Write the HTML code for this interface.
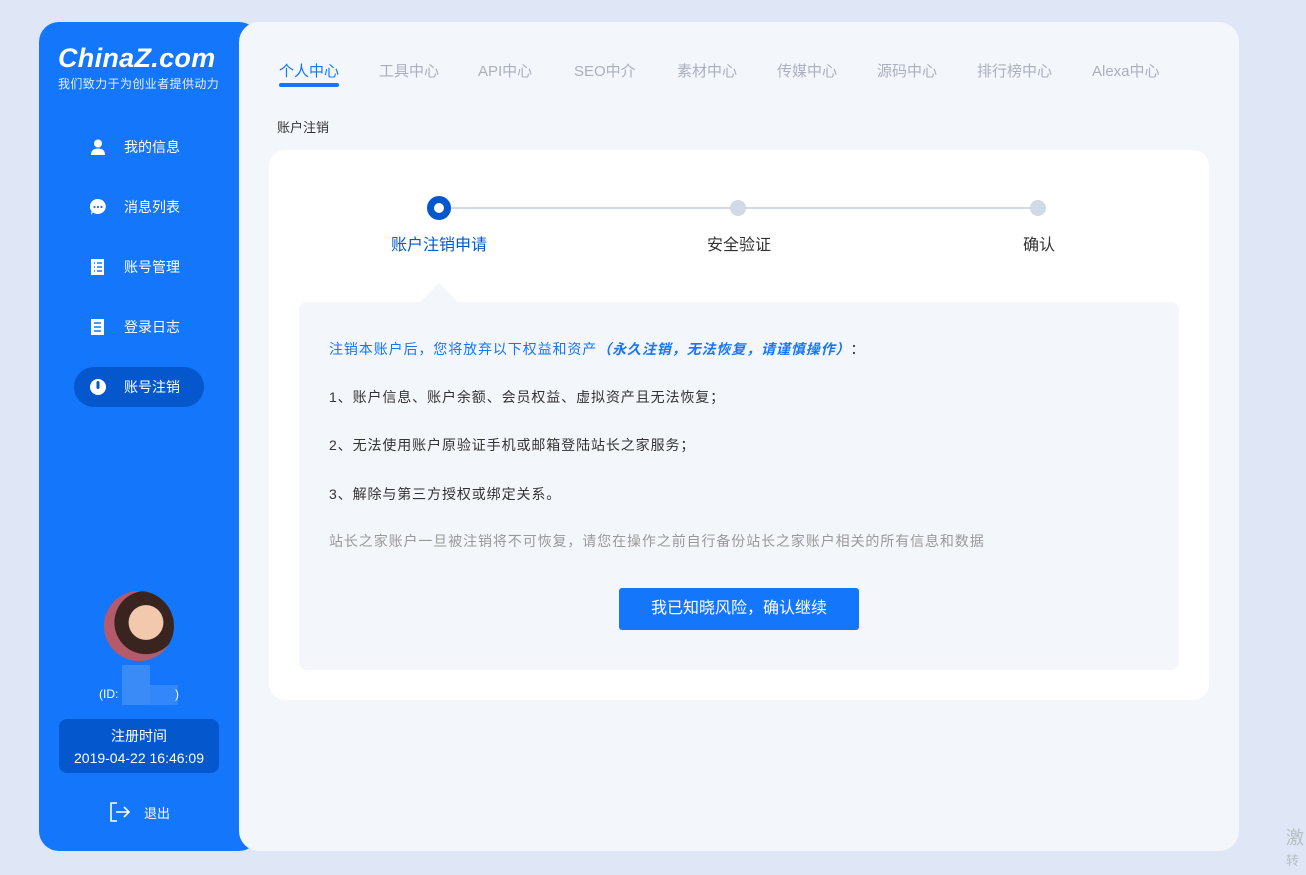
<!DOCTYPE html>
<html><head><meta charset="utf-8"><style>
*{margin:0;padding:0;box-sizing:border-box}
body{width:1306px;height:875px;background:#dfe7f7;font-family:"Liberation Sans","Noto Sans CJK SC",sans-serif;position:relative;overflow:hidden}
.side{position:absolute;left:39px;top:22px;width:220px;height:829px;background:#1476fb;border-radius:20px}
.main{position:absolute;left:239px;top:22px;width:1000px;height:829px;background:#f3f6fb;border-radius:20px}
.logo{position:absolute;left:58px;top:43px;color:#fff;font-size:27px;font-weight:bold;font-style:italic;letter-spacing:0.3px}
.slogan{position:absolute;left:58px;top:75px;color:#e6efff;font-size:12px;letter-spacing:0.4px}
.mi{position:absolute;left:74px;width:130px;height:40px;color:#fff;font-size:14px;line-height:40px}
.mi span{position:absolute;left:50px}
.mi svg{position:absolute;left:16px;top:12px}
.act{background:#0457cc;border-radius:20px}
.nav{position:absolute;top:60px;font-size:15px;color:#a9b0bf}
.abs{position:absolute}
.t{font-size:14px;letter-spacing:0.9px}
</style></head><body>
<div class="side"></div>
<div class="main"></div>
<div class="logo">ChinaZ.com</div>
<div class="slogan">我们致力于为创业者提供动力</div>
<div class="mi" style="top:127px"><svg width="16" height="16" viewBox="0 0 16 16"><circle cx="8" cy="4.5" r="4" fill="#fff"/><path d="M1 16c0-5 3-6.5 7-6.5s7 1.5 7 6.5z" fill="#fff"/></svg><span>我的信息</span></div>
<div class="mi" style="top:187px"><svg width="16" height="16" viewBox="0 0 16 16"><path d="M8 0a8 7.5 0 1 1-5 13.5L1 16l.5-4A8 7.5 0 0 1 8 0z" fill="#fff"/><circle cx="4.5" cy="8" r="1.1" fill="#1476fb"/><circle cx="8" cy="8" r="1.1" fill="#1476fb"/><circle cx="11.5" cy="8" r="1.1" fill="#1476fb"/></svg><span>消息列表</span></div>
<div class="mi" style="top:247px"><svg width="16" height="16" viewBox="0 0 16 16"><rect x="1" y="0" width="13" height="16" fill="#fff"/><path d="M4 4h1M4 8h1M4 12h1M7 4h5M7 8h5M7 12h5" stroke="#1476fb" stroke-width="1.5"/></svg><span>账号管理</span></div>
<div class="mi" style="top:307px"><svg width="16" height="16" viewBox="0 0 16 16"><rect x="1" y="0" width="13" height="16" fill="#fff"/><path d="M4 4h7M4 8h7M4 12h7" stroke="#1476fb" stroke-width="1.5"/></svg><span>登录日志</span></div>
<div class="mi act" style="top:367px"><svg width="16" height="16" viewBox="0 0 16 16"><circle cx="8" cy="8" r="8" fill="#fff"/><rect x="6.5" y="2" width="3" height="8" rx="1.5" fill="#0457cc"/></svg><span>账号注销</span></div>
<div class="abs" style="left:104px;top:591px;width:70px;height:70px;border-radius:50%;background:radial-gradient(circle at 60% 45%,#f2c9ad 0 30%,#3a2420 31% 55%,#b45a6b 56%)"></div>
<div class="abs" style="left:122px;top:665px;width:28px;height:40px;background:#4a93f7;opacity:.7"></div>
<div class="abs" style="left:150px;top:685px;width:28px;height:20px;background:#4a93f7;opacity:.6"></div>
<div class="abs" style="left:99px;top:687px;color:#fff;font-size:12px">(ID:</div>
<div class="abs" style="left:175px;top:687px;color:#fff;font-size:12px">)</div>
<div class="abs" style="left:59px;top:719px;width:160px;height:54px;background:#0457cc;border-radius:8px;color:#fff;font-size:14px;text-align:center;line-height:22px;padding-top:6px">注册时间<br>2019-04-22 16:46:09</div>
<svg class="abs" style="left:109px;top:802px" width="22" height="20" viewBox="0 0 22 20"><path d="M8 1H2v18h6M7 10h13M15 5l5 5-5 5" fill="none" stroke="#fff" stroke-width="1.6"/></svg>
<div class="abs" style="left:144px;top:803px;color:#fff;font-size:13px">退出</div>

<div class="nav" style="left:279px;color:#1476fb">个人中心</div>
<div class="abs" style="left:279px;top:83px;width:60px;height:4px;border-radius:2px;background:#1476fb"></div>
<div class="nav" style="left:379px">工具中心</div>
<div class="nav" style="left:478px">API中心</div>
<div class="nav" style="left:574px">SEO中介</div>
<div class="nav" style="left:677px">素材中心</div>
<div class="nav" style="left:777px">传媒中心</div>
<div class="nav" style="left:877px">源码中心</div>
<div class="nav" style="left:977px">排行榜中心</div>
<div class="nav" style="left:1092px">Alexa中心</div>
<div class="abs" style="left:277px;top:117px;font-size:13px;color:#333">账户注销</div>

<div class="abs" style="left:269px;top:150px;width:940px;height:550px;background:#fff;border-radius:16px"></div>
<div class="abs" style="left:438px;top:207px;width:600px;height:2px;background:#d0d9e6"></div>
<div class="abs" style="left:427px;top:196px;width:24px;height:24px;border-radius:50%;background:#0457cc;border:7px solid #0457cc"><div style="width:10px;height:10px;background:#fff;border-radius:50%"></div></div>
<div class="abs" style="left:730px;top:200px;width:16px;height:16px;border-radius:50%;background:#d0d9e6"></div>
<div class="abs" style="left:1030px;top:200px;width:16px;height:16px;border-radius:50%;background:#d0d9e6"></div>
<div class="abs" style="left:391px;top:231px;font-size:16px;color:#0457cc">账户注销申请</div>
<div class="abs" style="left:707px;top:231px;font-size:16px;color:#333">安全验证</div>
<div class="abs" style="left:1023px;top:231px;font-size:16px;color:#333">确认</div>

<div class="abs" style="left:299px;top:302px;width:880px;height:368px;background:#f3f6fb;border-radius:8px"></div>
<div class="abs" style="left:420px;top:283px;width:0;height:0;border-left:19px solid transparent;border-right:19px solid transparent;border-bottom:19px solid #f3f6fb"></div>
<div class="abs t" style="left:329px;top:339px;color:#1476fb">注销本账户后，您将放弃以下权益和资产<b><i>（永久注销，无法恢复，请谨慎操作）</i></b><span style="color:#333">：</span></div>
<div class="abs t" style="left:329px;top:387px;color:#333">1、账户信息、账户余额、会员权益、虚拟资产且无法恢复；</div>
<div class="abs t" style="left:329px;top:435px;color:#333">2、无法使用账户原验证手机或邮箱登陆站长之家服务；</div>
<div class="abs t" style="left:329px;top:484px;color:#333">3、解除与第三方授权或绑定关系。</div>
<div class="abs t" style="left:329px;top:531px;color:#999">站长之家账户一旦被注销将不可恢复，请您在操作之前自行备份站长之家账户相关的所有信息和数据</div>
<div class="abs" style="left:619px;top:588px;width:240px;height:42px;background:#1476fb;border-radius:3px;color:#fff;font-size:16px;text-align:center;line-height:42px">我已知晓风险，确认继续</div>
<div class="abs" style="left:1286px;top:824px;font-size:18px;color:#b8bcc4">激</div>
<div class="abs" style="left:1286px;top:850px;font-size:13px;color:#b8bcc4">转</div>
</body></html>
